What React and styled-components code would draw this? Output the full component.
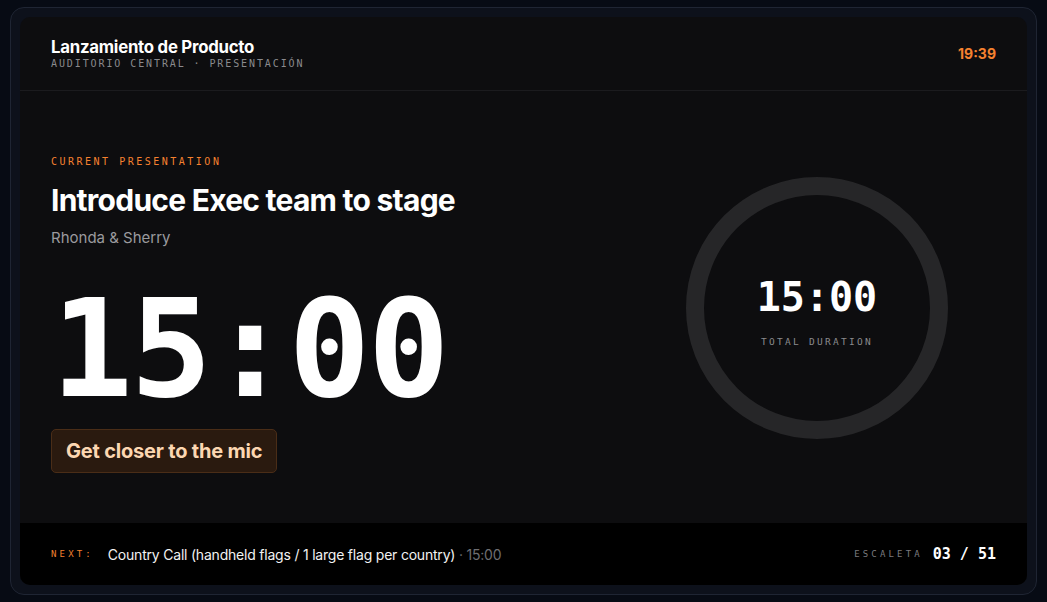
import styled, { createGlobalStyle } from "styled-components";

const GlobalStyle = createGlobalStyle`
  html, body {
    margin: 0;
    padding: 0;
    background: #070b14;
    height: 100%;
  }
  #root {
    height: 100%;
  }
  * {
    box-sizing: border-box;
  }
`;

const mono = `"DejaVu Sans Mono", "Liberation Mono", monospace`;
const sans = `Inter, "Noto Sans", sans-serif`;

const Page = styled.div`
  height: 602px;
  padding: 7px 10px;
  font-family: ${sans};
`;

const Frame = styled.div`
  height: 588px;
  padding: 9px;
  background: #0d111b;
  border: 1px solid #1f2533;
  border-radius: 14px;
`;

const Panel = styled.div`
  height: 100%;
  display: flex;
  flex-direction: column;
  background: #0d0d0f;
  border-radius: 10px;
  overflow: hidden;
`;

const Header = styled.header`
  height: 74px;
  flex-shrink: 0;
  display: flex;
  align-items: center;
  justify-content: space-between;
  padding: 0 31px;
  border-bottom: 1px solid #1b1b1e;
`;

const TitleBlock = styled.div`
  display: flex;
  flex-direction: column;
  gap: 1px;
  margin-top: -2px;
`;

const EventTitle = styled.div`
  color: #fff;
  font-size: 16.8px;
  font-weight: 700;
  letter-spacing: -0.015em;
`;

const EventMeta = styled.div`
  color: #8a8a8d;
  font-family: ${mono};
  font-size: 10px;
  letter-spacing: 0.19em;
`;

const Clock = styled.div`
  color: #f5812f;
  font-size: 14px;
  font-weight: 700;
`;

const Main = styled.main`
  flex: 1;
  display: flex;
  align-items: center;
  justify-content: space-between;
  padding: 0 79px 0 31px;
`;

const Current = styled.section`
  display: flex;
  flex-direction: column;
  align-items: flex-start;
  margin-top: 14px;
`;

const Eyebrow = styled.div`
  color: ${(p) => p.$color || "#f5812f"};
  font-family: ${mono};
  font-size: ${(p) => p.$size || 10}px;
  letter-spacing: ${(p) => p.$spacing || 0.25}em;
  text-transform: uppercase;
`;

const Heading = styled.h1`
  margin: 15px 0 0;
  color: #fff;
  font-size: 30px;
  font-weight: 700;
  letter-spacing: -0.025em;
`;

const Presenters = styled.div`
  margin-top: 10px;
  color: #9a9a9e;
  font-size: 15px;
`;

const BigTimer = styled.div`
  margin-top: 34px;
  color: #fff;
  font-family: ${mono};
  font-size: 136px;
  font-weight: 700;
  line-height: 1;
  letter-spacing: -0.02em;
`;

const Cue = styled.div`
  margin-top: 12px;
  padding: 9px 14px;
  background: #2a1a0f;
  border: 1px solid #4a2d17;
  border-radius: 5px;
  color: #fcd7b2;
  font-size: 20px;
  font-weight: 700;
  letter-spacing: -0.01em;
`;

const Ring = styled.div`
  width: 262px;
  height: 262px;
  border-radius: 50%;
  border: 18px solid #262628;
  display: flex;
  flex-direction: column;
  align-items: center;
  justify-content: center;
  margin-top: 1px;
`;

const RingTime = styled.div`
  color: #fff;
  font-family: ${mono};
  font-size: 40px;
  font-weight: 700;
  line-height: 1;
  margin-top: 8px;
`;

const Footer = styled.footer`
  height: 62px;
  flex-shrink: 0;
  display: flex;
  align-items: center;
  justify-content: space-between;
  padding: 0 31px;
  background: #000;
`;

const Group = styled.div`
  display: flex;
  align-items: center;
  gap: ${(p) => p.$gap || 12}px;
`;

const NextText = styled.div`
  color: #f2f2f2;
  font-size: 14px;
  letter-spacing: -0.015em;
`;

const Dim = styled.span`
  color: #6e6e72;
`;

const Count = styled.div`
  color: #fff;
  font-family: ${mono};
  font-size: 15px;
  font-weight: 700;
`;

export default function App() {
  return (
    <>
      <GlobalStyle />
      <Page>
        <Frame>
          <Panel>
            <Header>
              <TitleBlock>
                <EventTitle>Lanzamiento de Producto</EventTitle>
                <EventMeta>AUDITORIO CENTRAL · PRESENTACIÓN</EventMeta>
              </TitleBlock>
              <Clock>19:39</Clock>
            </Header>
            <Main>
              <Current>
                <Eyebrow>Current Presentation</Eyebrow>
                <Heading>Introduce Exec team to stage</Heading>
                <Presenters>Rhonda &amp; Sherry</Presenters>
                <BigTimer>15:00</BigTimer>
                <Cue>Get closer to the mic</Cue>
              </Current>
              <Ring>
                <RingTime>15:00</RingTime>
                <Eyebrow $color="#8a8a8d" $size={9.5} $spacing={0.24} style={{ marginTop: 19 }}>
                  Total Duration
                </Eyebrow>
              </Ring>
            </Main>
            <Footer>
              <Group $gap={14}>
                <Eyebrow $size={9} $spacing={0.35}>Next:</Eyebrow>
                <NextText>
                  Country Call (handheld flags / 1 large flag per country) <Dim>· 15:00</Dim>
                </NextText>
              </Group>
              <Group $gap={10}>
                <Eyebrow $color="#7a7a7e" $size={9} $spacing={0.35}>Escaleta</Eyebrow>
                <Count>03 / 51</Count>
              </Group>
            </Footer>
          </Panel>
        </Frame>
      </Page>
    </>
  );
}
